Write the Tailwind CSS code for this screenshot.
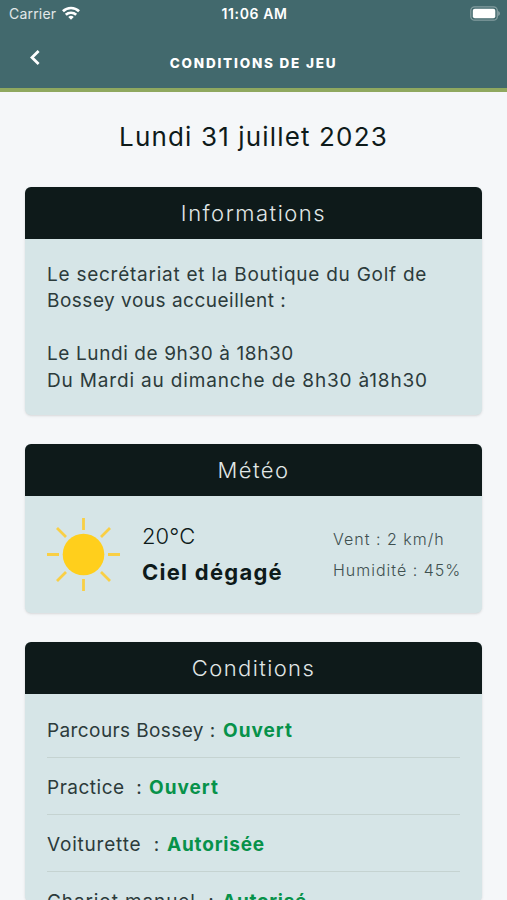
<!DOCTYPE html>
<html lang="fr">
<head>
    <meta charset="UTF-8">
    <meta name="viewport" content="width=device-width, initial-scale=1.0">
    <title>Conditions de jeu</title>
    <script src="https://cdn.jsdelivr.net/npm/@tailwindcss/browser@4"></script>
</head>
<body class="h-[900px] overflow-hidden bg-[#f5f7f9] font-['Inter',sans-serif] text-[#0e1a1a]">
    <!-- Header -->
    <header class="h-[92px] bg-[#42696d] border-b-4 border-[#8fa85f] text-white">
        <div class="h-7 pl-[9px] pr-[7px] pb-[2px] grid grid-cols-3 items-center text-[14px]">
            <div class="flex items-center gap-1.5 text-white/85">
                <span class="tracking-[0.2px]">Carrier</span>
                <svg class="w-[18px] h-[14px]" viewBox="0 0 19 14" fill="none" stroke="white" stroke-width="2.8">
                    <path d="M1 5.2a12.2 12.2 0 0 1 17 0"></path>
                    <path d="M4 8.9a8 8 0 0 1 11 0"></path>
                    <path d="M9.5 14L6.6 11.2a4.2 4.2 0 0 1 5.8 0Z" fill="white" stroke="none"></path>
                </svg>
            </div>
            <span class="text-center font-semibold tracking-[0.6px]">11:06 AM</span>
            <svg class="w-[31px] h-[15px] justify-self-end" viewBox="0 0 31 15">
                <rect x="1.8" y="0.8" width="26.5" height="13.4" rx="3.8" fill="none" stroke="white" stroke-opacity="0.35" stroke-width="1.3"></rect>
                <rect x="3.8" y="2.8" width="22.5" height="9.4" rx="2" fill="white"></rect>
                <path d="M29.2 5v5c1-.4 1.7-1.4 1.7-2.5S30.2 5.4 29.2 5Z" fill="white" fill-opacity="0.4"></path>
            </svg>
        </div>
        <div class="h-[60px] grid grid-cols-[40px_1fr_40px] pt-5 leading-[31px]">
            <svg class="w-[10px] h-[15px] ml-[30px] mt-[2px]" viewBox="0 0 10 15" fill="none" stroke="white" stroke-width="2.8">
                <path d="M8.6 1L2 7.5l6.6 6.4"></path>
            </svg>
            <h1 class="text-center text-[13.5px] font-extrabold tracking-[1.8px]">CONDITIONS DE JEU</h1>
        </div>
    </header>

    <main class="px-[25px] pt-[25px]">
        <h2 class="text-center text-[26px] leading-[40px] tracking-[1.15px] mb-[30px]">Lundi 31 juillet 2023</h2>

        <!-- Informations -->
        <section class="h-[228px] mb-[29px] rounded-md overflow-hidden bg-[#d6e5e7] shadow-sm">
            <h3 class="h-[52px] leading-[53px] bg-[#0e1a1a] text-[#e1e7e7] text-center text-[22px] font-light tracking-[1.5px]">Informations</h3>
            <div class="px-[22px] pt-[22.5px] text-[19px] leading-[26.5px] text-[#2c3b3b] whitespace-nowrap">
                <p class="tracking-[0.75px]">Le secrétariat et la Boutique du Golf de</p>
                <p class="tracking-[0.5px]">Bossey vous accueillent :</p>
                <br>
                <p class="tracking-[0.6px]">Le Lundi de 9h30 à 18h30</p>
                <p class="tracking-[0.84px]">Du Mardi au dimanche de 8h30 à18h30</p>
            </div>
        </section>

        <!-- Météo -->
        <section class="h-[169px] mb-[29px] rounded-md overflow-hidden bg-[#d6e5e7] shadow-sm">
            <h3 class="h-[52px] leading-[53px] bg-[#0e1a1a] text-[#e1e7e7] text-center text-[22px] font-light tracking-[1.5px]">Météo</h3>
            <div class="flex h-[117px] pl-[22px] whitespace-nowrap">
                <svg class="w-[73px] h-[73px] mt-[22px] shrink-0" viewBox="-36.5 -36.5 73 73" stroke="#f9cf45" stroke-width="2.8">
                    <circle r="20.8" fill="#ffcf1c" stroke="none"></circle>
                    <path d="M0-36.5v12M0 24.5v12M-36.5 0h12M24.5 0h12M-26.5-26.5l9 9M26.5-26.5l-9 9M-26.5 26.5l9-9M26.5 26.5l-9-9"></path>
                </svg>
                <div class="w-[191px] ml-[22px] pt-[22px] text-[22px] leading-[36px]">
                    <p class="font-light tracking-[0.1px]">20°C</p>
                    <p class="font-bold tracking-[1.25px]">Ciel dégagé</p>
                </div>
                <div class="pt-[28px] text-[16px] leading-[31px] font-light text-[#3f5050]">
                    <p class="tracking-[1px]">Vent : 2 km/h</p>
                    <p class="tracking-[1px]">Humidité : 45%</p>
                </div>
            </div>
        </section>

        <!-- Conditions -->
        <section class="rounded-md overflow-hidden bg-[#d6e5e7] shadow-sm">
            <h3 class="h-[52px] leading-[53px] bg-[#0e1a1a] text-[#e1e7e7] text-center text-[22px] font-light tracking-[1.4px]">Conditions</h3>
            <ul class="px-[22px] pt-[7px] text-[19px] leading-[59px] text-[#2c3b3b]">
                <li class="flex h-[57px] border-b border-[#c5d3d1]"><span class="w-[176px] whitespace-pre tracking-[0.4px]">Parcours Bossey :</span><b class="text-[#07924a] tracking-[1px]">Ouvert</b></li>
                <li class="flex h-[57px] border-b border-[#c5d3d1]"><span class="w-[102px] whitespace-pre tracking-[0.5px]">Practice  :</span><b class="text-[#07924a] tracking-[1px]">Ouvert</b></li>
                <li class="flex h-[57px] border-b border-[#c5d3d1]"><span class="w-[120px] whitespace-pre tracking-[0.8px]">Voiturette  :</span><b class="text-[#07924a] tracking-[0.8px]">Autorisée</b></li>
                <li class="flex h-[30px]"><span class="w-[175px] whitespace-pre tracking-[0.9px]">Chariot manuel  :</span><b class="text-[#07924a] tracking-[0.7px]">Autorisé</b></li>
            </ul>
        </section>
    </main>
</body>
</html>
